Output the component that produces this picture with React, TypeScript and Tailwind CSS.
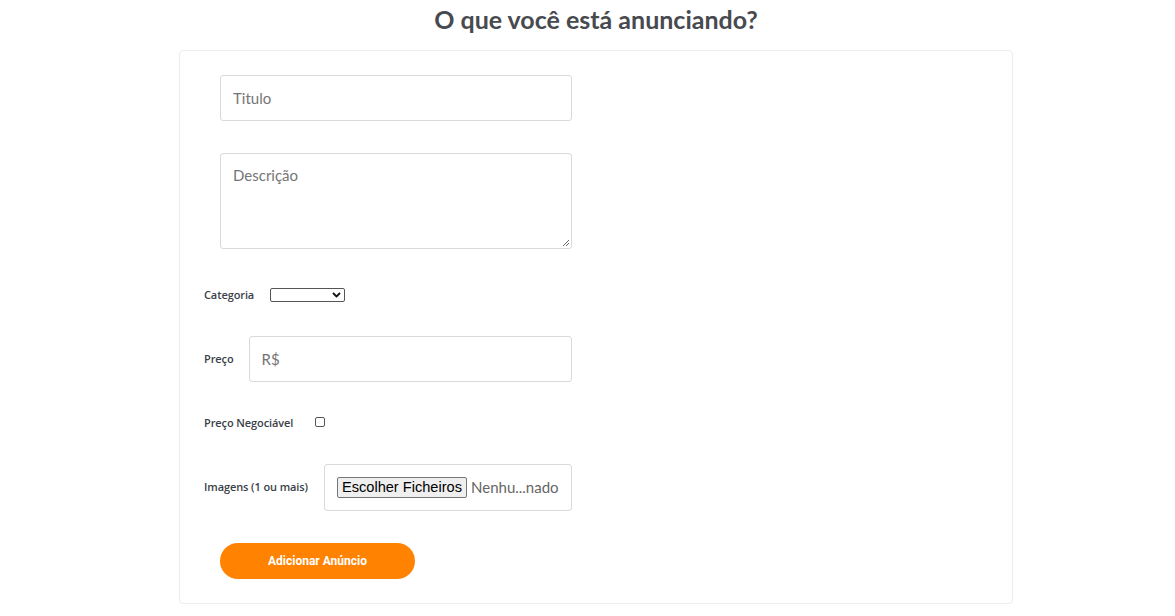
import React from "react";

export default function App() {
  const label = "text-[11px] font-semibold text-[#3a3f48] whitespace-nowrap tracking-[-0.1px]";
  return (
    <div className="w-[1175px] h-[616px] bg-white overflow-hidden" style={{ fontFamily: "Lato, 'Open Sans', sans-serif" }}>
      <h1 className="text-center text-[25px] font-bold text-[#474a4f] leading-[30px] pt-[4px] pl-[17px]">
        O que você está anunciando?
      </h1>
      <div className="ml-[179px] mt-[16px] w-[834px] h-[554px] border border-[#ececec] rounded-[4px] px-[24px] pt-[24px]">
        <div className="w-[368px] flex flex-col">
          <div className="ml-[16px] h-[46px] border border-[#d9d9d9] rounded-[3px] flex items-center px-[12px] text-[15px] text-[#757575]">
            Titulo
          </div>
          <div className="relative ml-[16px] mt-[32px] h-[96px] border border-[#d9d9d9] rounded-[3px] px-[12px] pt-[10px] text-[15px] text-[#757575]">
            Descrição
            <svg className="absolute right-[1px] bottom-[1px]" width="8" height="8" viewBox="0 0 8 8">
              <path d="M7 1 L1 7 M7 4 L4 7" stroke="#666" strokeWidth="1" />
            </svg>
          </div>
          <div className="mt-[23px] h-[46px] flex items-center gap-[16px]" style={{ fontFamily: "'Open Sans', sans-serif" }}>
            <span className={label}>Categoria</span>
            <div className="w-[75px] h-[14px] border border-[#555] rounded-[2px] flex items-center justify-end pr-[3px]">
              <svg width="9" height="6" viewBox="0 0 9 6">
                <path d="M1 1 L4.5 4.5 L8 1" stroke="#111" strokeWidth="1.8" fill="none" />
              </svg>
            </div>
          </div>
          <div className="mt-[18px] h-[46px] flex items-center gap-[15px]" style={{ fontFamily: "'Open Sans', sans-serif" }}>
            <span className={label}>Preço</span>
            <div className="flex-1 h-[46px] border border-[#d9d9d9] rounded-[3px] flex items-center px-[12px] text-[15px] text-[#757575]" style={{ fontFamily: "Lato, sans-serif" }}>
              R$
            </div>
          </div>
          <div className="mt-[18px] h-[46px] flex items-center gap-[22px]" style={{ fontFamily: "'Open Sans', sans-serif" }}>
            <span className={label}>Preço Negociável</span>
            <div className="w-[10px] h-[10px] border border-[#555] rounded-[2px] -mt-[2px]" />
          </div>
          <div className="mt-[18px] h-[47px] flex items-center gap-[16px]" style={{ fontFamily: "'Open Sans', sans-serif" }}>
            <span className={label}>Imagens (1 ou mais)</span>
            <div className="flex-1 h-[47px] border border-[#d9d9d9] rounded-[3px] flex items-center pl-[12px]">
              <div className="h-[21px] px-[4px] bg-[#efefef] border border-[#767676] rounded-[2px] flex items-center text-[14.6px] text-black" style={{ fontFamily: "'Liberation Sans', Arial, sans-serif" }}>
                Escolher Ficheiros
              </div>
              <span className="ml-[4px] text-[15px] text-[#666]" style={{ fontFamily: "Lato, sans-serif" }}>Nenhu...nado</span>
            </div>
          </div>
          <div className="mt-[32px] ml-[16px] w-[195px] h-[36px] rounded-full bg-[#ff8200] flex items-center justify-center text-white text-[12px] font-bold" style={{ fontFamily: "Roboto, Arial, sans-serif" }}>
            Adicionar Anúncio
          </div>
        </div>
      </div>
    </div>
  );
}
